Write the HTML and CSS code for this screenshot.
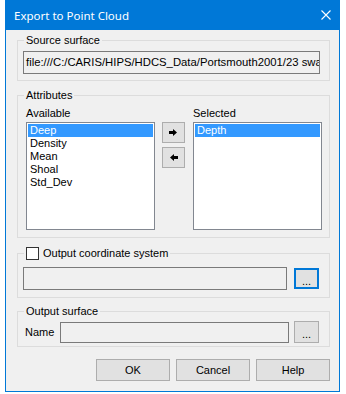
FILE: index.html
```html
<!doctype html>
<html>
    <head>
        <title>Export to Point Cloud</title>
        <link rel="stylesheet" href="styles.css">
    </head>
    <body>
        <div class="window">
            <div class="titlebar">
                <span class="title">Export to Point Cloud</span>
                <svg class="close" width="10" height="10" viewBox="0 0 10 10">
                    <path d="M0.5 0.5 L9.5 9.5 M9.5 0.5 L0.5 9.5" stroke="#fff" stroke-width="1.1" fill="none"/>
                </svg>
            </div>

            <div class="client">
                <fieldset class="group group-source">
                    <legend>Source surface</legend>
                    <div class="field source-field">file:///C:/CARIS/HIPS/HDCS_Data/Portsmouth2001/23 swath.csar</div>
                </fieldset>

                <fieldset class="group group-attr">
                    <legend>Attributes</legend>
                    <div class="attr-cols">
                        <div class="attr-col">
                            <div class="col-label">Available</div>
                            <ul class="listbox">
                                <li class="selected">Deep</li>
                                <li>Density</li>
                                <li>Mean</li>
                                <li>Shoal</li>
                                <li>Std_Dev</li>
                            </ul>
                        </div>
                        <div class="move-buttons">
                            <button class="btn arrow-btn">
                                <svg width="9" height="7" viewBox="0 0 9 7"><polygon points="0,2 4,2 4,0 8,3.5 4,7 4,5 0,5" fill="#000"/></svg>
                            </button>
                            <button class="btn arrow-btn">
                                <svg width="9" height="7" viewBox="0 0 9 7"><polygon points="9,2 5,2 5,0 1,3.5 5,7 5,5 9,5" fill="#000"/></svg>
                            </button>
                        </div>
                        <div class="attr-col">
                            <div class="col-label">Selected</div>
                            <ul class="listbox">
                                <li class="selected">Depth</li>
                            </ul>
                        </div>
                    </div>
                </fieldset>

                <fieldset class="group group-coord">
                    <legend class="check-legend"><input type="checkbox" class="check"><span>Output coordinate system</span></legend>
                    <div class="field-row coord-row">
                        <div class="field coord-field"></div>
                        <button class="btn browse-btn focused">...</button>
                    </div>
                </fieldset>

                <fieldset class="group group-output">
                    <legend>Output surface</legend>
                    <div class="field-row name-row">
                        <span class="name-label">Name</span>
                        <div class="field name-field"></div>
                        <button class="btn browse-btn">...</button>
                    </div>
                </fieldset>

                <div class="dialog-buttons">
                    <button class="btn dlg-btn">OK</button>
                    <button class="btn dlg-btn">Cancel</button>
                    <button class="btn dlg-btn">Help</button>
                </div>
            </div>
        </div>
    </body>
</html>
```

FILE: styles.css
```css
body{
    margin: 0;
    background: #fff;
    font-family: "Liberation Sans", Arial, sans-serif;
    font-size: 11px;
    color: #000;
}

.window{
    margin-left: 5px;
    width: 335px;
    height: 392px;
    box-sizing: border-box;
    background: #0078d7;
    padding: 0 1px 1px;
    display: flex;
    flex-direction: column;
}

.titlebar{
    height: 30px;
    display: flex;
    align-items: center;
    justify-content: space-between;
    padding: 0 8px;
    color: #fff;
}
.title{
    font-family: "Noto Sans", "Liberation Sans", sans-serif;
    font-size: 11.5px;
}
.close{
    display: block;
}

.client{
    flex: 1;
    background: #f0f0f0;
    padding: 4px 9px 10px 11px;
    display: flex;
    flex-direction: column;
}

.group{
    margin: 0;
    padding: 0;
    min-width: 0;
    border: 1px solid #dcdcdc;
}
.group legend{
    margin-left: 6px;
    padding: 0 2px;
    line-height: 13px;
    height: 13px;
}

.field{
    box-sizing: border-box;
    border: 1px solid #7a7a7a;
    background: #f0f0f0;
    height: 23px;
    line-height: 21px;
    padding: 0 2px;
    white-space: nowrap;
    overflow: hidden;
}

/* source */
.source-field{
    margin: 4px 9px 6px 5px;
    font-size: 11.3px;
}

/* attributes */
.group-attr{
    margin-top: 8px;
}
.attr-cols{
    display: flex;
    margin: 5px 7px 7px 8px;
}
.attr-col{
    width: 129px;
}
.col-label{
    line-height: 13px;
    height: 13px;
    margin-bottom: 2px;
}
.listbox{
    list-style: none;
    margin: 0;
    padding: 1px;
    height: 108px;
    box-sizing: border-box;
    background: #fff;
    border: 1px solid #828790;
}
.listbox li{
    height: 13px;
    line-height: 13px;
    padding-left: 2px;
}
.listbox li.selected{
    background: #3399ff;
    color: #fff;
}
.move-buttons{
    width: 23px;
    margin: 0 8px 0 7px;
    padding-top: 15px;
    display: flex;
    flex-direction: column;
    gap: 4px;
}

.btn{
    box-sizing: border-box;
    margin: 0;
    padding: 0;
    background: #e1e1e1;
    border: 1px solid #adadad;
    font-family: inherit;
    font-size: 11px;
    color: #000;
    display: flex;
    align-items: center;
    justify-content: center;
}
.arrow-btn{
    width: 23px;
    height: 21px;
}
.arrow-btn svg{
    display: block;
}

/* output coordinate system */
.group-coord{
    margin-top: 9px;
}
.check-legend{
    display: flex;
    align-items: center;
    gap: 4px;
}
.check{
    appearance: none;
    -webkit-appearance: none;
    margin: 0;
    width: 13px;
    height: 13px;
    box-sizing: border-box;
    border: 1px solid #333;
    background: #fff;
}
.field-row{
    display: flex;
    align-items: center;
}
.coord-row{
    margin: 7px 10px 7px 5px;
}
.coord-field{
    width: 264px;
    margin-right: 7px;
}
.browse-btn{
    width: 25px;
    height: 21px;
    padding-top: 4px;
}
.browse-btn.focused{
    border: 2px solid #0078d7;
}

/* output surface */
.group-output{
    margin-top: 7px;
}
.name-row{
    margin: 3px 10px 3px 7px;
    height: 22px;
}
.name-label{
    width: 35px;
}
.name-field{
    width: 229px;
    height: 21px;
    margin-right: 5px;
}
.name-row .browse-btn{
    height: 22px;
}

.dialog-buttons{
    margin-top: 12px;
    display: flex;
    justify-content: flex-end;
    gap: 6px;
}
.dlg-btn{
    width: 74px;
    height: 22px;
}
```
